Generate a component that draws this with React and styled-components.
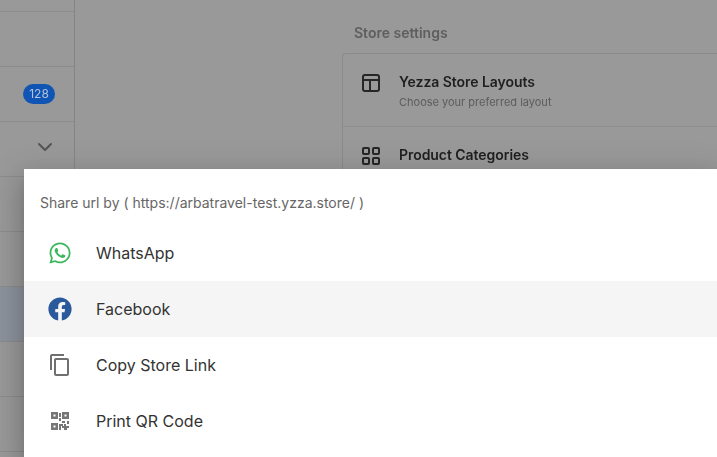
import React from "react";
import styled, { createGlobalStyle } from "styled-components";
import { FaWhatsapp, FaFacebook } from "react-icons/fa";
import { MdOutlineContentCopy } from "react-icons/md";
import { ChevronDown } from "lucide-react";

const GlobalStyle = createGlobalStyle`
  html, body {
    margin: 0;
    height: 100%;
    overflow: hidden;
    font-family: Inter, "Liberation Sans", sans-serif;
  }
`;

// the page behind the sheet is painted in its dimmed colours
const Page = styled.div`
  position: relative;
  width: 717px;
  height: 457px;
  overflow: hidden;
  display: flex;
  background: #999;
`;

const Sidebar = styled.div`
  width: 74px;
  flex: none;
  border-right: 1px solid #858585;
  filter: blur(0.4px);
`;

const SideRow = styled.div`
  box-sizing: border-box;
  height: ${(p) => p.$height || 55}px;
  display: flex;
  align-items: center;
  justify-content: flex-end;
  padding-right: ${(p) => p.$right || 19}px;
  padding-bottom: ${(p) => p.$lift || 0}px;
  border-bottom: 1px solid #8c8c8c;
  background: ${(p) => (p.$active ? "#8d939d" : "transparent")};
`;

const Badge = styled.span`
  width: 32px;
  height: 20px;
  border-radius: 10px;
  background: #1054b4;
  color: #b4c4dc;
  font-size: 12px;
  line-height: 20px;
  text-align: center;
`;

const Main = styled.div`
  flex: 1;
  padding: 24px 0 0 267px;
  min-width: 0;
  filter: blur(0.4px);
`;

const SectionTitle = styled.h2`
  margin: 0 0 11px 12px;
  font-size: 14px;
  line-height: 18px;
  font-weight: 600;
  color: #5e5e5e;
`;

const SettingsCard = styled.div`
  border: 1px solid #8a8a8a;
  border-right: 0;
  border-radius: 4px 0 0 0;
`;

const SettingRow = styled.div`
  box-sizing: border-box;
  height: 73px;
  display: flex;
  gap: 18px;
  padding: 19px 18px;
  border-bottom: 1px solid #8f8f8f;
`;

const SettingIcon = styled.svg`
  width: 20px;
  height: 20px;
  flex: none;
  fill: none;
  stroke: #262626;
  stroke-width: 2;
`;

const SettingTitle = styled.div`
  font-size: 14px;
  line-height: 18px;
  font-weight: 600;
  letter-spacing: -0.05px;
  color: #1f1f1f;
`;

const SettingText = styled.div`
  margin-top: 4px;
  font-size: 11px;
  line-height: 14px;
  color: #5c5c5c;
`;

const Sheet = styled.div`
  position: absolute;
  left: 24px;
  top: 169px;
  right: 0;
  bottom: 0;
  background: #fff;
  box-shadow: 0 8px 10px -5px rgba(0, 0, 0, 0.2),
    0 16px 24px 2px rgba(0, 0, 0, 0.14), 0 6px 30px 5px rgba(0, 0, 0, 0.12);
`;

const SheetTitle = styled.div`
  height: 56px;
  padding: 25px 16px 0;
  box-sizing: border-box;
  font-size: 14px;
  line-height: 17px;
  color: #666;
`;

const ShareRow = styled.div`
  height: 56px;
  display: flex;
  align-items: center;
  gap: 24px;
  padding-left: 24px;
  background: ${(p) => (p.$active ? "#f5f5f5" : "transparent")};
`;

const ShareIcon = styled.span`
  width: 24px;
  height: 24px;
  flex: none;
  display: flex;
  align-items: center;
  justify-content: center;
  color: ${(p) => p.$color};
  font-size: 24px;
`;

const ShareLabel = styled.span`
  font-size: 16px;
  line-height: 20px;
  color: #333;
`;

const QrCode = () => (
  <svg width="24" height="24" viewBox="0 0 24 24" fill="#767676">
    <path d="M3 3h7v7H3zM5.500 5.500v2h2v-2zM14 3h7v7h-7zM16.500 5.500v2h2v-2zM3 14h7v7H3zM5.500 16.500v2h2v-2z" fillRule="evenodd" />
    <path d="M11 4h2v4h-2zM11 9h2v3h-2zM14 12h3v2h-3zM19 12h2v3h-2zM11 15h4v2h-2v4h-2zM16 15h2v2h3v2h-2v2h-3v-2h-2v-2h2z" />
  </svg>
);

export default function App() {
  return (
    <Page>
      <GlobalStyle />
      <Sidebar>
        <SideRow $height={12} />
        <SideRow />
        <SideRow>
          <Badge>128</Badge>
        </SideRow>
        <SideRow $right={17} $lift={4}>
          <ChevronDown size={24} color="#555" strokeWidth={2} />
        </SideRow>
        <SideRow />
        <SideRow />
        <SideRow $active />
        <SideRow />
        <SideRow />
      </Sidebar>
      <Main>
        <SectionTitle>Store settings</SectionTitle>
        <SettingsCard>
          <SettingRow>
            <SettingIcon viewBox="0 0 20 20">
              <rect x="2" y="2" width="16" height="16" rx="2" />
              <path d="M2 7h16M9 7v11" />
            </SettingIcon>
            <div>
              <SettingTitle>Yezza Store Layouts</SettingTitle>
              <SettingText>Choose your preferred layout</SettingText>
            </div>
          </SettingRow>
          <SettingRow>
            <SettingIcon viewBox="0 0 20 20">
              <rect x="2" y="2" width="6" height="6" rx="1" />
              <rect x="12" y="2" width="6" height="6" rx="1" />
              <rect x="2" y="12" width="6" height="6" rx="1" />
              <rect x="12" y="12" width="6" height="6" rx="1" />
            </SettingIcon>
            <div>
              <SettingTitle>Product Categories</SettingTitle>
            </div>
          </SettingRow>
        </SettingsCard>
      </Main>
      <Sheet>
        <SheetTitle>Share url by ( https://arbatravel-test.yzza.store/ )</SheetTitle>
        <ShareRow>
          <ShareIcon $color="#3cb75c"><FaWhatsapp /></ShareIcon>
          <ShareLabel>WhatsApp</ShareLabel>
        </ShareRow>
        <ShareRow $active>
          <ShareIcon $color="#2b5a9c"><FaFacebook /></ShareIcon>
          <ShareLabel>Facebook</ShareLabel>
        </ShareRow>
        <ShareRow>
          <ShareIcon $color="#707070"><MdOutlineContentCopy /></ShareIcon>
          <ShareLabel>Copy Store Link</ShareLabel>
        </ShareRow>
        <ShareRow>
          <ShareIcon><QrCode /></ShareIcon>
          <ShareLabel>Print QR Code</ShareLabel>
        </ShareRow>
      </Sheet>
    </Page>
  );
}
